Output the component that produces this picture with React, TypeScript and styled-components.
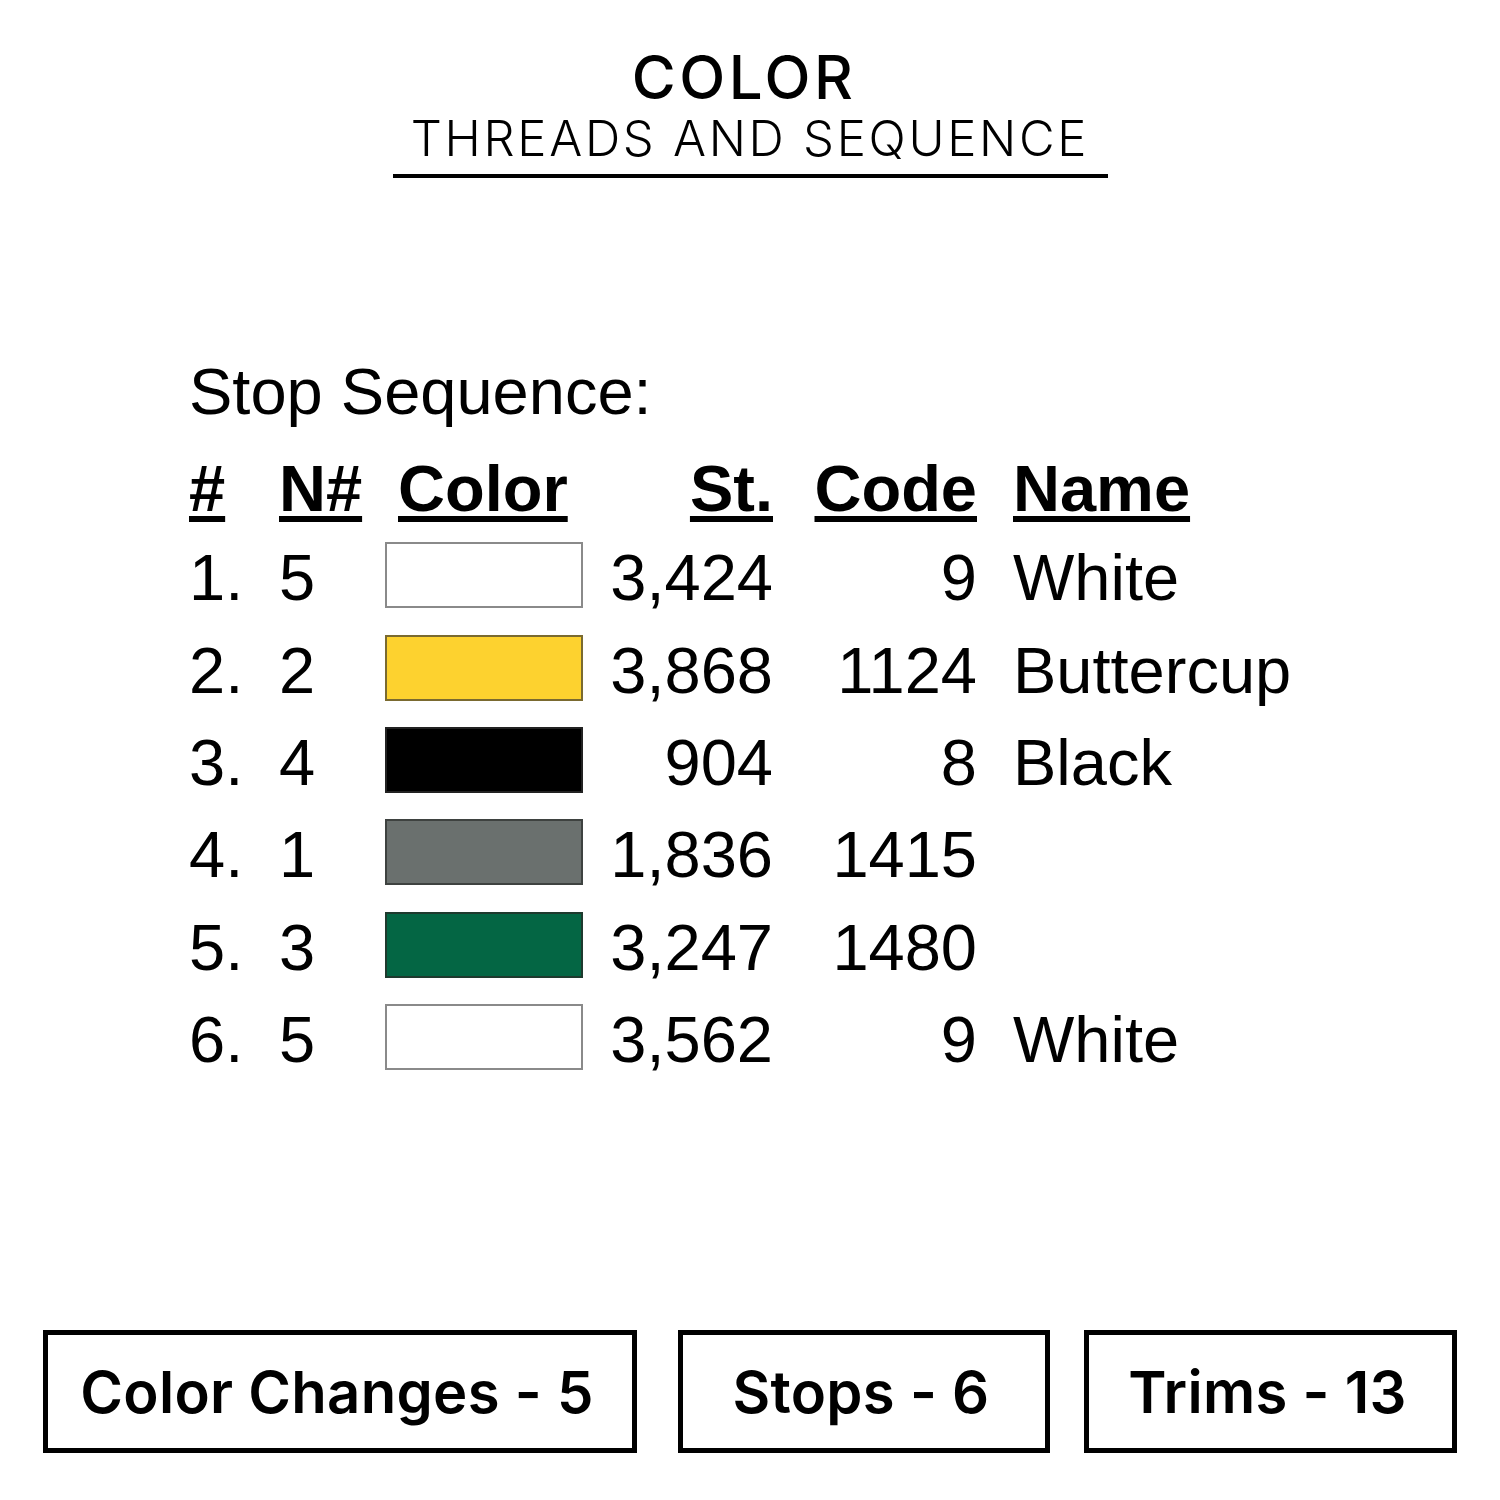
import styled, { createGlobalStyle } from "styled-components";

const GlobalStyle = createGlobalStyle`
  html, body {
    margin: 0;
    padding: 0;
    background: #ffffff;
  }
  body {
    font-family: "Liberation Sans", Arial, sans-serif;
    color: #000000;
  }
`;

const Page = styled.div`
  width: 1500px;
  height: 1500px;
  display: flex;
  flex-direction: column;
  background: #ffffff;
`;

const Header = styled.header`
  display: flex;
  flex-direction: column;
  align-items: center;
  padding-top: 43px;
`;

const Title = styled.h1`
  margin: 0;
  padding-right: 12px;
  font-family: Inter, "Open Sans", sans-serif;
  font-size: 60px;
  font-weight: 500;
  line-height: 68px;
  letter-spacing: 3.5px;
`;

const Subtitle = styled.h2`
  margin: 0;
  width: 715px;
  box-sizing: border-box;
  text-align: center;
  font-family: Inter, "Open Sans", sans-serif;
  font-size: 49px;
  font-weight: 300;
  line-height: 56px;
  letter-spacing: 2.7px;
  padding-bottom: 7px;
  border-bottom: 4px solid #000;
`;

const Sequence = styled.section`
  margin-top: 171px;
  margin-left: 189px;
  font-size: 65px;
`;

const SequenceTitle = styled.div`
  line-height: 86px;
  margin-bottom: 11px;
`;

const Table = styled.div`
  display: grid;
  grid-template-columns: 90px 106px 198px 190px 204px 320px;
  grid-template-rows: 86px repeat(6, 92.4px);
  align-items: center;
`;

const Cell = styled.div<{ $align?: "left" | "right"; $pad?: number }>`
  text-align: ${(p) => p.$align ?? "left"};
  padding-left: ${(p) => p.$pad ?? 0}px;
  white-space: nowrap;
  line-height: 86px;
`;

const HeadCell = styled(Cell)`
  font-weight: bold;
  text-decoration: underline;
  text-decoration-thickness: 6px;
  text-underline-offset: 5px;
`;

const Swatch = styled.div<{ $fill: string; $edge: string }>`
  width: 198px;
  height: 66px;
  box-sizing: border-box;
  background: ${(p) => p.$fill};
  border: 2px solid ${(p) => p.$edge};
  margin-top: -6px;
`;

const Stats = styled.footer`
  margin-top: auto;
  margin-bottom: 47px;
  padding-left: 43px;
  display: flex;
`;

const StatBox = styled.div<{ $width: number; $gap?: number }>`
  width: ${(p) => p.$width}px;
  margin-left: ${(p) => p.$gap ?? 0}px;
  height: 123px;
  box-sizing: border-box;
  border: 5px solid #000;
  display: flex;
  align-items: center;
  justify-content: center;
  padding-right: 6px;
  font-family: Inter, "Open Sans", sans-serif;
  font-size: 58px;
  font-weight: 600;
  letter-spacing: 0.3px;
`;

const rows = [
  { n: "1.", needle: "5", fill: "#ffffff", edge: "#8a8a8a", st: "3,424", code: "9", name: "White" },
  { n: "2.", needle: "2", fill: "#fdd22f", edge: "#7a6a30", st: "3,868", code: "1124", name: "Buttercup" },
  { n: "3.", needle: "4", fill: "#000000", edge: "#222222", st: "904", code: "8", name: "Black" },
  { n: "4.", needle: "1", fill: "#6a706e", edge: "#3e4240", st: "1,836", code: "1415", name: "" },
  { n: "5.", needle: "3", fill: "#046644", edge: "#1e3a2e", st: "3,247", code: "1480", name: "" },
  { n: "6.", needle: "5", fill: "#ffffff", edge: "#8a8a8a", st: "3,562", code: "9", name: "White" },
];

const App = () => {
  return (
    <Page>
      <GlobalStyle />
      <Header>
        <Title>COLOR</Title>
        <Subtitle>THREADS AND SEQUENCE</Subtitle>
      </Header>

      <Sequence>
        <SequenceTitle>Stop Sequence:</SequenceTitle>
        <Table>
          <HeadCell>#</HeadCell>
          <HeadCell>N#</HeadCell>
          <HeadCell $pad={13}>Color</HeadCell>
          <HeadCell $align="right">St.</HeadCell>
          <HeadCell $align="right">Code</HeadCell>
          <HeadCell $pad={36}>Name</HeadCell>
          {rows.map((r) => (
            <>
              <Cell key={r.n + "a"}>{r.n}</Cell>
              <Cell key={r.n + "b"}>{r.needle}</Cell>
              <Swatch key={r.n + "c"} $fill={r.fill} $edge={r.edge} />
              <Cell key={r.n + "d"} $align="right">{r.st}</Cell>
              <Cell key={r.n + "e"} $align="right">{r.code}</Cell>
              <Cell key={r.n + "f"} $pad={36}>{r.name}</Cell>
            </>
          ))}
        </Table>
      </Sequence>

      <Stats>
        <StatBox $width={594}>Color Changes - 5</StatBox>
        <StatBox $width={372} $gap={41}>Stops - 6</StatBox>
        <StatBox $width={373} $gap={34}>Trims - 13</StatBox>
      </Stats>
    </Page>
  );
};

export default App;
